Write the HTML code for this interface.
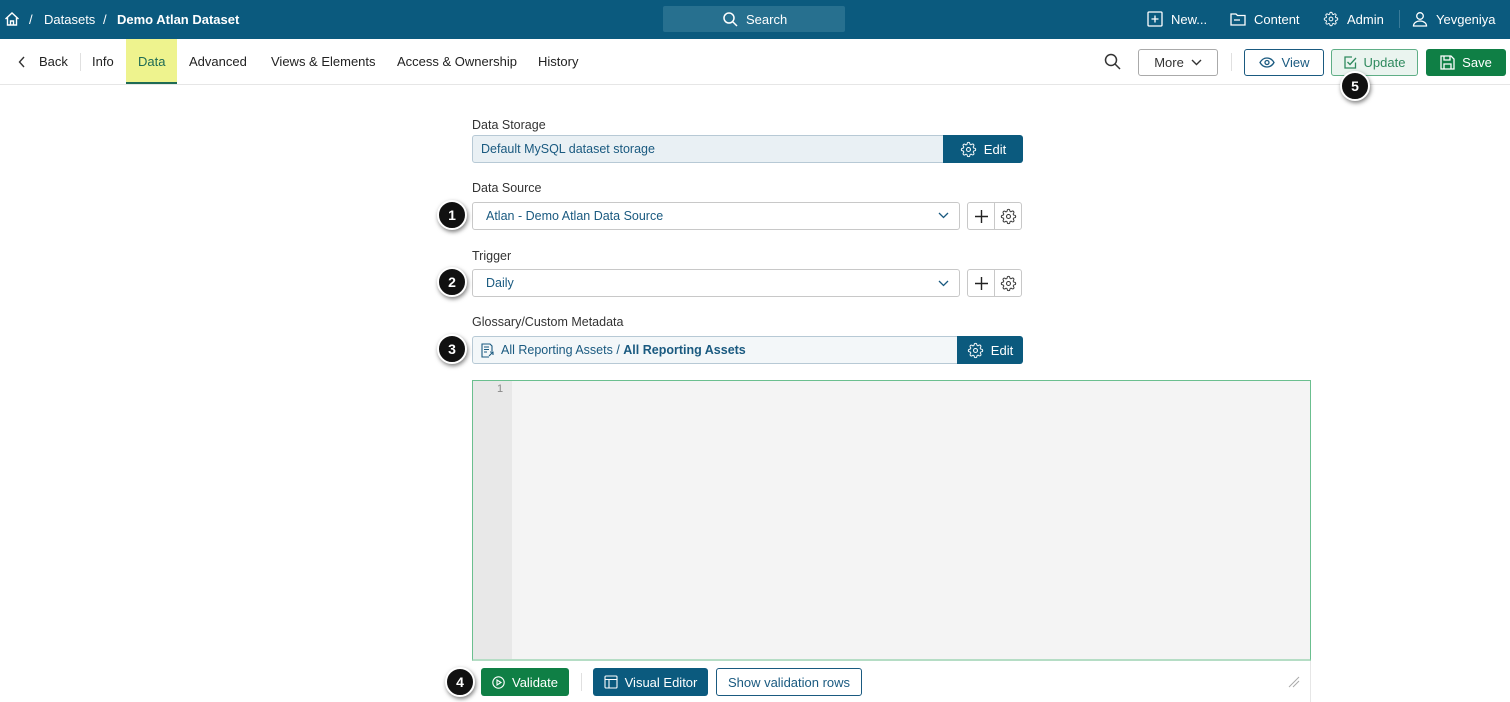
<!DOCTYPE html>
<html><head><meta charset="utf-8">
<style>
*{box-sizing:border-box;margin:0;padding:0}
body{width:1510px;height:702px;background:#fff;font-family:"Liberation Sans",sans-serif;font-size:13px;color:#222;position:relative;overflow:hidden}
.a{position:absolute}
.hdr{left:0;top:0;width:1510px;height:39px;background:#0b5a7e;color:#fff}
.hdr span{position:absolute;top:12px;font-size:13px}
.nav{left:0;top:39px;width:1510px;height:46px;border-bottom:1px solid #e6e6e6}
.nav span{position:absolute;top:15px;font-size:13px;color:#222}
.btn{position:absolute;border-radius:3px;font-size:13px;display:flex;align-items:center;justify-content:center;gap:7px}
.lbl{position:absolute;font-size:12.5px;color:#333}
.inp{position:absolute;border:1px solid #c8c8c8;border-radius:3px;background:#fff;color:#1a5a80;font-size:12.5px;padding-left:13px;display:flex;align-items:center}
.badge{position:absolute;width:30px;height:30px;border-radius:50%;background:#111;color:#fff;font-weight:bold;font-size:14px;display:flex;align-items:center;justify-content:center;border:2px solid #fff;box-shadow:1px 2px 4px rgba(0,0,0,.5)}
.sq{position:absolute;width:28px;height:28px;border:1px solid #c8c8c8;background:#fff;display:flex;align-items:center;justify-content:center}
svg{display:block}
</style></head><body>
<svg width="0" height="0" style="position:absolute"><defs><symbol id="g" viewBox="-1 -1 26 26"><circle cx="12" cy="12" r="3" fill="none" stroke="currentColor" stroke-width="1.6"/><path fill="none" stroke="currentColor" stroke-width="1.5" d="M19.4 15a1.65 1.65 0 0 0 .33 1.82l.06.06a2 2 0 0 1 0 2.83 2 2 0 0 1-2.83 0l-.06-.06a1.65 1.65 0 0 0-1.82-.33 1.65 1.65 0 0 0-1 1.51V21a2 2 0 0 1-2 2 2 2 0 0 1-2-2v-.09A1.65 1.65 0 0 0 9 19.4a1.65 1.65 0 0 0-1.82.33l-.06.06a2 2 0 0 1-2.83 0 2 2 0 0 1 0-2.83l.06-.06a1.65 1.65 0 0 0 .33-1.82 1.65 1.65 0 0 0-1.51-1H3a2 2 0 0 1-2-2 2 2 0 0 1 2-2h.09A1.65 1.65 0 0 0 4.6 9a1.65 1.65 0 0 0-.33-1.82l-.06-.06a2 2 0 0 1 0-2.83 2 2 0 0 1 2.83 0l.06.06a1.65 1.65 0 0 0 1.82.33H9a1.65 1.65 0 0 0 1-1.51V3a2 2 0 0 1 2-2 2 2 0 0 1 2 2v.09a1.65 1.65 0 0 0 1 1.51 1.65 1.65 0 0 0 1.82-.33l.06-.06a2 2 0 0 1 2.83 0 2 2 0 0 1 0 2.83l-.06.06a1.65 1.65 0 0 0-.33 1.82V9a1.65 1.65 0 0 0 1.51 1H21a2 2 0 0 1 2 2 2 2 0 0 1-2 2h-.09a1.65 1.65 0 0 0-1.51 1z"/></symbol></defs></svg>

<div class="a hdr">
 <svg class="a" style="left:4px;top:11px" width="16" height="16" viewBox="0 0 16 16" fill="none" stroke="#fff" stroke-width="1.4"><path d="M1.5 8L8 2l6.5 6M3.5 6.5V14h9V6.5M6.5 14v-4h3v4"/></svg>
 <span style="left:29px">/</span><span style="left:44px">Datasets</span><span style="left:103px">/</span><span style="left:117px;font-weight:bold">Demo Atlan Dataset</span>
 <div class="a" style="left:663px;top:6px;width:182px;height:26px;background:#27708f;border-radius:2px"></div>
 <svg class="a" style="left:722px;top:11px" width="16" height="16" viewBox="0 0 16 16" fill="none" stroke="#fff" stroke-width="1.5"><circle cx="7" cy="7" r="5"/><path d="M11 11l4 4"/></svg>
 <span style="left:746px">Search</span>
 <svg class="a" style="left:1147px;top:11px" width="16" height="16" viewBox="0 0 16 16" fill="none" stroke="#fff" stroke-width="1.3"><rect x="1" y="1" width="14" height="14" rx="1"/><path d="M8 4.5v7M4.5 8h7"/></svg>
 <span style="left:1171px">New...</span>
 <svg class="a" style="left:1230px;top:11px" width="16" height="16" viewBox="0 0 16 16" fill="none" stroke="#fff" stroke-width="1.3"><path d="M1 3h5l1.5 1.5H15V14H1z M4 9h6"/></svg>
 <span style="left:1254px">Content</span>
 <svg class="a" style="left:1323px;top:11px;color:#fff" width="16" height="16"><use href="#g"/></svg>
 <span style="left:1347px">Admin</span>
 <div class="a" style="left:1399px;top:10px;width:1px;height:18px;background:#3a7b99"></div>
 <svg class="a" style="left:1412px;top:11px" width="16" height="16" viewBox="0 0 16 16" fill="none" stroke="#fff" stroke-width="1.3"><circle cx="8" cy="5" r="3.3"/><path d="M1.5 15c0-3 3-5 6.5-5s6.5 2 6.5 5z"/></svg>
 <span style="left:1436px">Yevgeniya</span>
</div>

<div class="a nav">
 <svg class="a" style="left:18px;top:17px" width="8" height="12" viewBox="0 0 8 12" fill="none" stroke="#333" stroke-width="1.4"><path d="M6 1L1.5 6 6 11"/></svg>
 <span style="left:39px">Back</span>
 <div class="a" style="left:80px;top:14px;width:1px;height:18px;background:#e0e0e0"></div>
 <span style="left:92px">Info</span>
 <div class="a" style="left:126px;top:0;width:51px;height:45px;background:#eef38e;border-bottom:2px solid #1e6b55"></div>
 <span style="left:138px;color:#1e6b55">Data</span>
 <span style="left:189px">Advanced</span>
 <span style="left:271px">Views &amp; Elements</span>
 <span style="left:397px">Access &amp; Ownership</span>
 <span style="left:538px">History</span>
 <svg class="a" style="left:1104px;top:14px" width="17" height="17" viewBox="0 0 17 17" fill="none" stroke="#333" stroke-width="1.5"><circle cx="7" cy="7" r="5.5"/><path d="M11 11l5 5"/></svg>
 <div class="btn" style="left:1138px;top:10px;width:80px;height:27px;border:1px solid #aaa;color:#333">More <svg width="11" height="7" viewBox="0 0 11 7" fill="none" stroke="#333" stroke-width="1.4"><path d="M1 1l4.5 4.5L10 1"/></svg></div>
 <div class="a" style="left:1231px;top:14px;width:1px;height:18px;background:#e0e0e0"></div>
 <div class="btn" style="left:1244px;top:10px;width:80px;height:27px;border:1px solid #1a5a80;color:#1a5a80"><svg width="16" height="11" viewBox="0 0 16 11" fill="none" stroke="#1a5a80" stroke-width="1.3"><path d="M1 5.5C3 2 5.5 1 8 1s5 1 7 4.5c-2 3.5-4.5 4.5-7 4.5S3 9 1 5.5z"/><circle cx="8" cy="5.5" r="2"/></svg>View</div>
 <div class="btn" style="left:1331px;top:10px;width:87px;height:27px;border:1px solid #5fae86;background:#eaf4ef;color:#2e8a5e"><svg width="13" height="13" viewBox="0 0 13 13" fill="none" stroke="#2e8a5e" stroke-width="1.3"><path d="M11.5 6.5V12H1V1h7"/><path d="M3.5 6l2.5 2.5L12 2"/></svg>Update</div>
 <div class="btn" style="left:1426px;top:10px;width:80px;height:27px;background:#0f7f45;color:#fff"><svg width="15" height="15" viewBox="0 0 15 15" fill="none" stroke="#fff" stroke-width="1.3"><path d="M1 1h10l3 3v10H1z M4 1v4h6V1 M4 14V9h7v5"/></svg>Save</div>
</div>
<div class="badge" style="left:1340px;top:71px">5</div>

<div class="lbl" style="left:472px;top:118px">Data Storage</div>
<div class="inp" style="left:472px;top:135px;width:474px;height:28px;background:#e9f0f4;border-color:#b7c9d5;border-radius:3px 0 0 3px;padding-left:8px">Default MySQL dataset storage</div>
<div class="btn" style="left:943px;top:135px;width:80px;height:28px;background:#0b5a7e;color:#fff;border-radius:0 3px 3px 0"><svg width="17" height="17" style="color:#fff"><use href="#g"/></svg>Edit</div>

<div class="lbl" style="left:472px;top:181px">Data Source</div>
<div class="inp" style="left:472px;top:202px;width:488px;height:28px">Atlan - Demo Atlan Data Source</div>
<svg class="a" style="left:938px;top:212px" width="11" height="7" viewBox="0 0 11 7" fill="none" stroke="#1a5a80" stroke-width="1.3"><path d="M1 1l4.5 4.5L10 1"/></svg>
<div class="sq" style="left:967px;top:202px;border-radius:3px 0 0 3px"><svg width="13" height="13" viewBox="0 0 13 13" stroke="#222" stroke-width="1.4"><path d="M6.5 0v13M0 6.5h13"/></svg></div>
<div class="sq" style="left:994px;top:202px;border-radius:0 3px 3px 0;color:#333"><svg width="17" height="17"><use href="#g"/></svg></div>
<div class="badge" style="left:437px;top:200px">1</div>

<div class="lbl" style="left:472px;top:249px">Trigger</div>
<div class="inp" style="left:472px;top:269px;width:488px;height:28px">Daily</div>
<svg class="a" style="left:938px;top:280px" width="11" height="7" viewBox="0 0 11 7" fill="none" stroke="#1a5a80" stroke-width="1.3"><path d="M1 1l4.5 4.5L10 1"/></svg>
<div class="sq" style="left:967px;top:269px;border-radius:3px 0 0 3px"><svg width="13" height="13" viewBox="0 0 13 13" stroke="#222" stroke-width="1.4"><path d="M6.5 0v13M0 6.5h13"/></svg></div>
<div class="sq" style="left:994px;top:269px;border-radius:0 3px 3px 0;color:#333"><svg width="17" height="17"><use href="#g"/></svg></div>
<div class="badge" style="left:437px;top:267px">2</div>

<div class="lbl" style="left:472px;top:315px">Glossary/Custom Metadata</div>
<div class="inp" style="left:472px;top:336px;width:488px;height:28px;background:#f3f7f9;border-color:#b7c9d5;padding-left:7px;border-radius:3px 0 0 3px"><svg width="15" height="15" viewBox="0 0 15 15" fill="none" stroke="#1a5a80" stroke-width="1.1"><path d="M9 14H2V1h8l2 2v5M4 4h5M4 6.5h5M4 9h3M9 13l4-4M10 9h3v3"/></svg><span style="margin-left:6px">All Reporting Assets / <b>All Reporting Assets</b></span></div>
<div class="btn" style="left:957px;top:336px;width:66px;height:28px;background:#0b5a7e;color:#fff;border-radius:0 3px 3px 0"><svg width="17" height="17" style="color:#fff"><use href="#g"/></svg>Edit</div>
<div class="badge" style="left:437px;top:334px">3</div>

<div class="a" style="left:472px;top:380px;width:839px;height:281px;background:#f4f4f4;border:1px solid #6bbf8f;border-bottom:2px solid #b5ddc5"></div>
<div class="a" style="left:473px;top:381px;width:39px;height:278px;background:#e8e8e8"></div>
<div class="a" style="left:497px;top:383px;font-size:11px;color:#888">1</div>
<div class="a" style="left:1310px;top:661px;width:1px;height:41px;background:#e6e6e6"></div>
<svg class="a" style="left:1288px;top:676px" width="12" height="12" viewBox="0 0 12 12" stroke="#aaa" stroke-width="1"><path d="M1 11L11 1M5 11l6-6"/></svg>

<div class="btn" style="left:481px;top:668px;width:88px;height:28px;background:#0f7f45;color:#fff"><svg width="13" height="13" viewBox="0 0 13 13" fill="none" stroke="#fff" stroke-width="1.1"><circle cx="6.5" cy="6.5" r="5.7"/><path d="M5 4v5l4-2.5z"/></svg>Validate</div>
<div class="a" style="left:581px;top:673px;width:1px;height:18px;background:#e0e0e0"></div>
<div class="btn" style="left:593px;top:668px;width:115px;height:28px;background:#0b5a7e;color:#fff"><svg width="14" height="14" viewBox="0 0 14 14" fill="none" stroke="#fff" stroke-width="1.1"><rect x="1" y="1" width="12" height="12" rx="1"/><path d="M1 4.5h12M5 4.5V13"/></svg>Visual Editor</div>
<div class="btn" style="left:716px;top:668px;width:146px;height:28px;border:1px solid #1a5a80;color:#1a5a80">Show validation rows</div>
<div class="badge" style="left:445px;top:667px">4</div>
</body></html>
